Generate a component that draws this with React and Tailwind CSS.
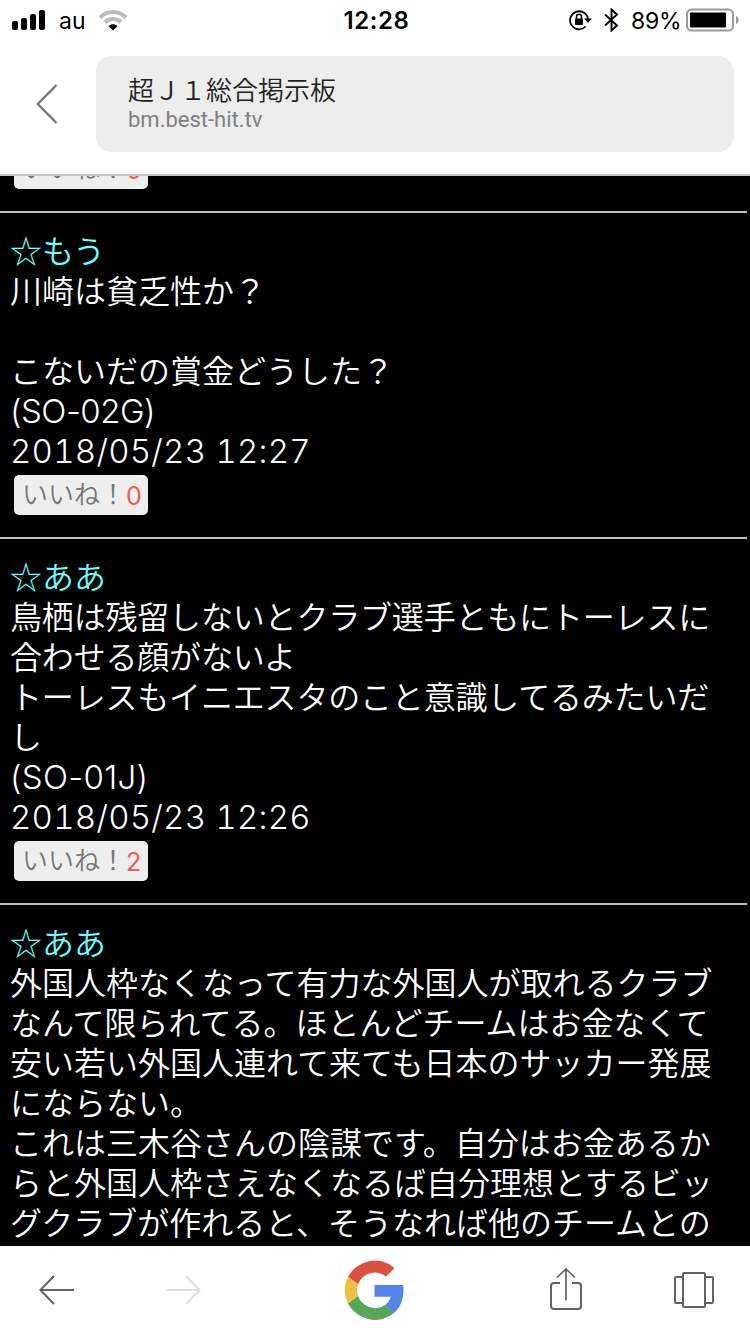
import React from 'react';

const posts = [
    {
        name: '☆もう',
        lines: ['川崎は貧乏性か？', '', 'こないだの賞金どうした？'],
        device: '(SO-02G)',
        deviceClass: 'tracking-[-0.5px]',
        date: '2018/05/23 12:27',
        likes: 0,
    },
    {
        name: '☆ああ',
        lines: [
            '鳥栖は残留しないとクラブ選手ともにトーレスに',
            '合わせる顔がないよ',
            'トーレスもイニエスタのこと意識してるみたいだ',
            'し',
        ],
        linesClass: 'tracking-[-0.18px]',
        device: '(SO-01J)',
        deviceClass: 'tracking-[0.3px]',
        date: '2018/05/23 12:26',
        likes: 2,
    },
    {
        name: '☆ああ',
        lines: [
            '外国人枠なくなって有力な外国人が取れるクラブ',
            'なんて限られてる。ほとんどチームはお金なくて',
            '安い若い外国人連れて来ても日本のサッカー発展',
            'にならない。',
            'これは三木谷さんの陰謀です。自分はお金あるか',
            'らと外国人枠さえなくなるば自分理想とするビッ',
            'グクラブが作れると、そうなれば他のチームとの',
        ],
    },
];

function StatusBar() {
    return (
        <div className="grid h-10 shrink-0 grid-cols-[1fr_auto_1fr] items-center pl-3 pr-[11px] font-['Inter',sans-serif] text-[23px] text-black">
            <div className="flex items-center">
                <svg width="34" height="20" viewBox="0 0 34 20">
                    <rect x="0" y="11" width="6" height="9" rx="2" />
                    <rect x="9" y="8" width="6" height="12" rx="2" />
                    <rect x="18" y="4" width="6" height="16" rx="2" />
                    <rect x="27" y="0" width="6" height="20" rx="2" />
                </svg>
                <span className="ml-[13px] w-[27px] pt-0.5">au</span>
                <svg className="ml-3" width="30" height="21" viewBox="0 0 30 21" fill="none">
                    <path d="M2 7.5C9 .3 21 .3 28 7.5" stroke="#bdbdbd" strokeWidth="4" />
                    <path d="M7 12.3c4.5-4.3 11.5-4.3 16 0" stroke="#bdbdbd" strokeWidth="4" />
                    <path d="M10.5 16c2.5-2.4 6.5-2.4 9 0L15 20.5z" fill="#000" />
                </svg>
            </div>
            <span className="pl-0.5 pt-0.5 text-[24px] font-semibold tracking-[0.6px]">12:28</span>
            <div className="flex items-center justify-end">
                <svg width="25" height="22" viewBox="0 0 25 22" fill="none" stroke="#000" strokeWidth="1.8">
                    <path d="M16.6 17.5A9 9 0 1 1 19 10" />
                    <path d="M15 9.5h8l-4 4.5z" fill="#000" stroke="none" />
                    <rect x="6" y="9.5" width="8" height="6.5" rx="0.8" fill="#000" stroke="none" />
                    <path d="M7.5 10V7.8a2.5 2.5 0 0 1 5 0V10" strokeWidth="1.5" />
                </svg>
                <svg className="ml-[10px]" width="16" height="24" viewBox="0 0 16 24" fill="none" stroke="#000" strokeWidth="1.9">
                    <path d="M1 6.5l12 11-5.5 5v-21l5.5 5-12 11" />
                </svg>
                <span className="ml-[11px] w-[50px] whitespace-nowrap pt-0.5 tracking-[-0.3px]">89%</span>
                <svg className="ml-[5px]" width="53" height="24" viewBox="0 0 53 24">
                    <rect x="1" y="1.5" width="46" height="21" rx="4.5" fill="none" stroke="#999" strokeWidth="2" />
                    <rect x="4" y="4.5" width="36" height="15" rx="1" />
                    <path d="M50 8c3.5 1.5 3.5 6.5 0 8z" fill="#999" />
                </svg>
            </div>
        </div>
    );
}

function AddressBar() {
    return (
        <div className="flex h-[136px] shrink-0 items-start border-b-2 border-[#c8c8c8] pr-4 pt-4">
            <div className="flex h-24 w-24 shrink-0 items-center pl-9">
                <svg width="22" height="40" viewBox="0 0 22 40" fill="none" stroke="#777" strokeWidth="2.4">
                    <path d="M20.5 1L1.8 20l18.7 19" />
                </svg>
            </div>
            <div className="h-24 flex-1 rounded-2xl bg-[#ededed] px-8 pt-4">
                <p className="font-['Noto_Sans_CJK_JP',sans-serif] text-[26px] font-[350] leading-[34px] text-[#222]">超Ｊ１総合掲示板</p>
                <p className="font-['Roboto',sans-serif] text-[22px] leading-[28px] text-[#808080]">bm.best-hit.tv</p>
            </div>
        </div>
    );
}

function LikeButton({ count }) {
    return (
        <button className="mx-[14px] mt-1 flex h-10 w-[134px] items-center rounded-[5px] bg-[#eee] pl-2 font-['Noto_Sans_CJK_JP',sans-serif] text-[26px] font-[350] text-[#777]">
            <span className="w-[104px] whitespace-nowrap pb-1 leading-9">いいね！</span>
            <span className="pt-0.5 font-['Inter',sans-serif] text-[25px] font-normal leading-9 text-[#e8605c]">{count}</span>
        </button>
    );
}

function Post({ post }) {
    return (
        <article className="mr-[3px] border-t-2 border-[#c0c0c0] pb-[22px] pt-4">
            <div className="whitespace-nowrap pl-[10px] font-['Noto_Sans_CJK_JP',sans-serif] text-[32px] font-[350] leading-10 text-white">
                <p className="h-10 text-[#66ffff]">{post.name}</p>
                <div className={post.linesClass}>
                    {post.lines.map((line, i) => (
                        <p key={i} className="h-10">{line}</p>
                    ))}
                </div>
            </div>
            {post.device && (
                <div className="pl-[10px] pt-0.5 font-['Inter',sans-serif] text-[33px] font-light leading-10 text-white">
                    <p className={post.deviceClass}>{post.device}</p>
                    <p className="tabular-nums tracking-[0.25px]">{post.date}</p>
                </div>
            )}
            {post.device && <LikeButton count={post.likes} />}
        </article>
    );
}

function GoogleLogo() {
    return (
        <svg className="mr-0.5" width="60" height="60" viewBox="0 0 60 60">
            <path d="M4 17A30 30 0 0 1 50.5 8L42 16.5A18 18 0 0 0 14 24z" fill="#d95140" />
            <path d="M4 17A30 30 0 0 0 4 43.5L14 36A18 18 0 0 1 14 24z" fill="#f2bf42" />
            <path d="M4 43.5A30 30 0 0 0 50.5 52.5L41 45A18 18 0 0 1 14 36z" fill="#58a55c" />
            <path d="M30.5 25H59.2C60.5 36 57.5 46 50.5 52.5L41 45.2C44 43 46 40 46.8 36.8H30.5z" fill="#5383ec" />
        </svg>
    );
}

function BottomBar() {
    return (
        <nav className="grid h-[88px] shrink-0 grid-cols-[113px_140px_243px_139px_117px] place-items-center bg-white text-[#5f6368]">
            <svg width="36" height="30" viewBox="0 0 36 30" fill="none" stroke="currentColor" strokeWidth="2">
                <path d="M15 1L1.3 15 15 29M1.5 15H35" />
            </svg>
            <svg className="text-[#e0e0e0]" width="36" height="30" viewBox="0 0 36 30" fill="none" stroke="currentColor" strokeWidth="2">
                <path d="M21 1l13.7 14L21 29M34.5 15H1" />
            </svg>
            <GoogleLogo />
            <svg width="34" height="44" viewBox="0 0 34 44" fill="none" stroke="currentColor" strokeWidth="2">
                <path d="M11 15H5a3 3 0 0 0-3 3v20a3 3 0 0 0 3 3h24a3 3 0 0 0 3-3V18a3 3 0 0 0-3-3h-6" />
                <path d="M8 9.5L17 1l9 8.5M17 1.5v31" strokeWidth="1.7" />
            </svg>
            <svg width="40" height="36" viewBox="0 0 40 36" fill="none" stroke="currentColor" strokeWidth="2">
                <rect x="9" y="1" width="22" height="34" rx="1" />
                <path d="M9 5H2a1 1 0 0 0-1 1v24a1 1 0 0 0 1 1h7M31 5h7a1 1 0 0 1 1 1v24a1 1 0 0 1-1 1h-7" />
            </svg>
        </nav>
    );
}

export default function App() {
    return (
        <div className="flex h-[1334px] w-[750px] flex-col overflow-hidden bg-white">
            <StatusBar />
            <AddressBar />
            <main className="h-[1070px] overflow-hidden bg-black">
                <div className="-mt-[31px] flow-root pb-[22px]">
                    <LikeButton count={0} />
                </div>
                {posts.map((post, i) => (
                    <Post key={i} post={post} />
                ))}
            </main>
            <BottomBar />
        </div>
    );
}
